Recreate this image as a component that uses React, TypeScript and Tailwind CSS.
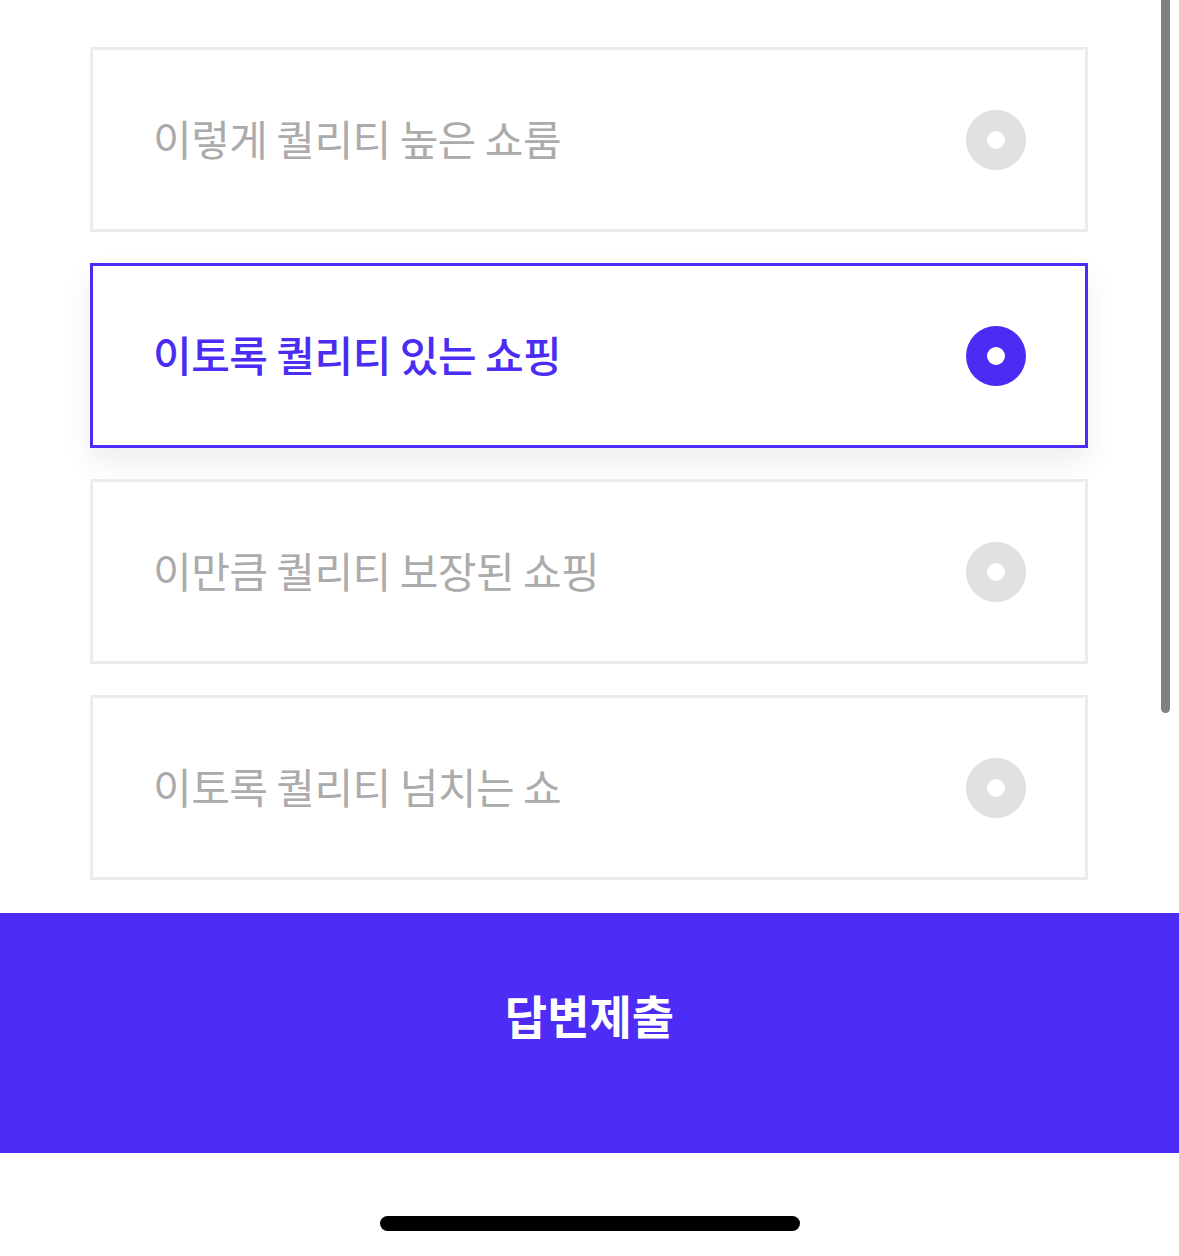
import React from "react";

const options = [
  "이렇게 퀄리티 높은 쇼룸",
  "이토록 퀄리티 있는 쇼핑",
  "이만큼 퀄리티 보장된 쇼핑",
  "이토록 퀄리티 넘치는 쇼",
];

export default function App() {
  const selected = 1;
  return (
    <div
      className="relative w-[1179px] h-[1256px] bg-white overflow-hidden"
      style={{ fontFamily: '"Noto Sans CJK KR", "Noto Sans", sans-serif' }}
    >
      <div className="flex flex-col gap-[31px] pl-[90px] pr-[91px] pt-[47px]">
        {options.map((t, i) => {
          const on = i === selected;
          return (
            <div
              key={i}
              className={
                on
                  ? "h-[185px] flex items-center justify-between pl-[60px] pr-[59px] border-[3px] border-[#4b2cf2] bg-white shadow-[0_14px_28px_rgba(0,0,0,0.07)]"
                  : "h-[185px] flex items-center justify-between pl-[60px] pr-[59px] border-[3px] border-[#ececec] bg-white"
              }
            >
              <span
                className={
                  on
                    ? "text-[42px] leading-none tracking-[-0.5px] font-medium text-[#4b2cf2] pb-[3px]"
                    : "text-[42px] leading-none tracking-[-0.5px] font-normal text-[#ababab] pb-[3px]"
                }
              >
                {t}
              </span>
              <span
                className={
                  on
                    ? "w-[60px] h-[60px] rounded-full bg-[#4b2cf2] flex items-center justify-center"
                    : "w-[60px] h-[60px] rounded-full bg-[#e0e0e0] flex items-center justify-center"
                }
              >
                <span className="w-[18px] h-[18px] rounded-full bg-white" />
              </span>
            </div>
          );
        })}
      </div>
      <div className="mt-[33px] h-[240px] bg-[#4d2cf5] flex justify-center pt-[78px]">
        <span className="text-[46px] leading-none font-bold text-white tracking-[0px]">
          답변제출
        </span>
      </div>
      <div className="flex justify-center pt-[63px]">
        <div className="w-[420px] h-[15px] rounded-full bg-black" />
      </div>
      <div className="absolute right-[9px] top-0 w-[9px] h-[713px] bg-[#808080] rounded-b-full" />
    </div>
  );
}
